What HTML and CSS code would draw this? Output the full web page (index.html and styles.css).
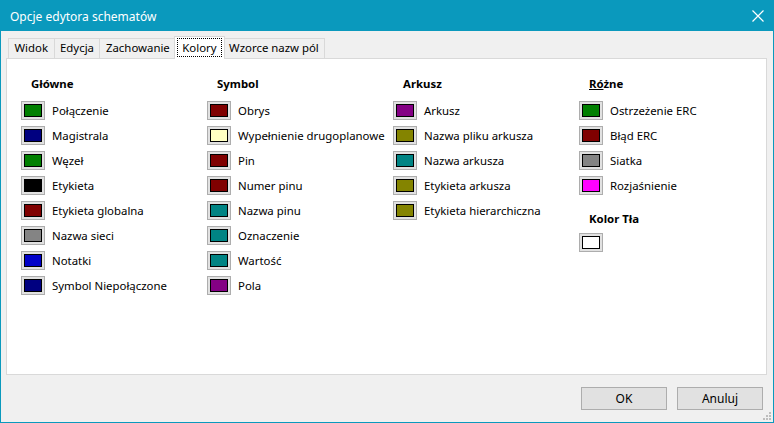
FILE: index.html
```html
<!DOCTYPE html>
<html lang="pl">
  <head>
    <meta charset="UTF-8" />
    <title>Opcje edytora schematów</title>
    <link rel="stylesheet" href="styles.css">
  </head>
  <body>
    <div class="window">
      <div class="titlebar">
        <span class="title">Opcje edytora schematów</span>
        <svg class="close" width="12" height="12" viewBox="0 0 12 12">
          <path d="M0.5 0.5 L11.5 11.5 M11.5 0.5 L0.5 11.5" stroke="#fff" stroke-width="1.2" />
        </svg>
      </div>

      <div class="content">
        <!-- tabs -->
        <div class="tabs">
          <div class="tab">Widok</div>
          <div class="tab">Edycja</div>
          <div class="tab">Zachowanie</div>
          <div class="tab active"><span class="focus">Kolory</span></div>
          <div class="tab">Wzorce nazw pól</div>
        </div>

        <div class="panel">
          <div class="columns">
            <div class="group">
              <div class="heading">Główne</div>
              <div class="row"><span class="swatch"><i style="background:#008000"></i></span>Połączenie</div>
              <div class="row"><span class="swatch"><i style="background:#000080"></i></span>Magistrala</div>
              <div class="row"><span class="swatch"><i style="background:#008000"></i></span>Węzeł</div>
              <div class="row"><span class="swatch"><i style="background:#000000"></i></span>Etykieta</div>
              <div class="row"><span class="swatch"><i style="background:#800000"></i></span>Etykieta globalna</div>
              <div class="row"><span class="swatch"><i style="background:#848484"></i></span>Nazwa sieci</div>
              <div class="row"><span class="swatch"><i style="background:#0000c8"></i></span>Notatki</div>
              <div class="row"><span class="swatch"><i style="background:#000080"></i></span>Symbol Niepołączone</div>
            </div>

            <div class="group">
              <div class="heading">Symbol</div>
              <div class="row"><span class="swatch"><i style="background:#800000"></i></span>Obrys</div>
              <div class="row"><span class="swatch"><i style="background:#ffffc2"></i></span>Wypełnienie drugoplanowe</div>
              <div class="row"><span class="swatch"><i style="background:#800000"></i></span>Pin</div>
              <div class="row"><span class="swatch"><i style="background:#800000"></i></span>Numer pinu</div>
              <div class="row"><span class="swatch"><i style="background:#008484"></i></span>Nazwa pinu</div>
              <div class="row"><span class="swatch"><i style="background:#008484"></i></span>Oznaczenie</div>
              <div class="row"><span class="swatch"><i style="background:#008484"></i></span>Wartość</div>
              <div class="row"><span class="swatch"><i style="background:#840084"></i></span>Pola</div>
            </div>

            <div class="group">
              <div class="heading">Arkusz</div>
              <div class="row"><span class="swatch"><i style="background:#840084"></i></span>Arkusz</div>
              <div class="row"><span class="swatch"><i style="background:#848400"></i></span>Nazwa pliku arkusza</div>
              <div class="row"><span class="swatch"><i style="background:#008484"></i></span>Nazwa arkusza</div>
              <div class="row"><span class="swatch"><i style="background:#848400"></i></span>Etykieta arkusza</div>
              <div class="row"><span class="swatch"><i style="background:#848400"></i></span>Etykieta hierarchiczna</div>
            </div>

            <div class="group">
              <div class="heading"><span class="mnemonic">Ró</span>żne</div>
              <div class="row"><span class="swatch"><i style="background:#008000"></i></span>Ostrzeżenie ERC</div>
              <div class="row"><span class="swatch"><i style="background:#800000"></i></span>Błąd ERC</div>
              <div class="row"><span class="swatch"><i style="background:#848484"></i></span>Siatka</div>
              <div class="row"><span class="swatch"><i style="background:#ff00ff"></i></span>Rozjaśnienie</div>
              <div class="heading second">Kolor Tła</div>
              <div class="row"><span class="swatch"><i style="background:#ffffff"></i></span></div>
            </div>
          </div>
        </div>

        <div class="buttons">
          <button class="btn">OK</button>
          <button class="btn">Anuluj</button>
        </div>
        <svg class="grip" width="8" height="8" viewBox="0 0 8 8">
          <rect x="6" y="0" width="2" height="2" fill="#bdbdbd" />
          <rect x="3" y="3" width="2" height="2" fill="#bdbdbd" />
          <rect x="6" y="3" width="2" height="2" fill="#bdbdbd" />
          <rect x="0" y="6" width="2" height="2" fill="#bdbdbd" />
          <rect x="3" y="6" width="2" height="2" fill="#bdbdbd" />
          <rect x="6" y="6" width="2" height="2" fill="#bdbdbd" />
        </svg>
      </div>
    </div>
  </body>
</html>
```

FILE: styles.css
```css
* {
  box-sizing: border-box;
}

body {
  margin: 0;
  font-family: "Noto Sans", "Open Sans", sans-serif;
  font-size: 11.4px;
  color: #000;
}

.window {
  width: 774px;
  height: 423px;
  border: 1px solid #0a99bd;
  display: flex;
  flex-direction: column;
  background: #f0f0f0;
}

.titlebar {
  height: 30px;
  background: #0a99bd;
  display: flex;
  align-items: center;
  justify-content: space-between;
  padding: 0 8px 0 9px;
  flex-shrink: 0;
}

.title {
  color: #fff;
  font-size: 12px;
}

.close {
  margin-right: 1px;
}

.content {
  flex: 1;
  display: flex;
  flex-direction: column;
  position: relative;
}

.tabs {
  display: flex;
  align-items: flex-end;
  height: 27px;
  padding-left: 7px;
}

.tab {
  height: 20px;
  line-height: 18px;
  padding: 0 5.5px;
  border: 1px solid #d9d9d9;
  border-bottom: none;
  border-right: none;
  background: #f0f0f0;
  white-space: nowrap;
}

.tab:last-child {
  border-right: 1px solid #d9d9d9;
}

.tab.active {
  background: #fff;
  margin: 0 -1px -1px -1px;
  padding: 1px 2px 0;
  border-right: 1px solid #d9d9d9;
  position: relative;
  z-index: 1;
  height: 23px;
}

.tab.active + .tab {
  border-left: none;
}

.focus {
  display: block;
  border: 1px dotted #000;
  padding: 0 4px;
  line-height: 17px;
}

.panel {
  margin: 0 6px 0 5px;
  height: 317px;
  background: #fff;
  border: 1px solid #d9d9d9;
  padding: 17px 0 0 14px;
}

.columns {
  display: grid;
  grid-template-columns: repeat(4, 186px);
}

.heading {
  font-weight: bold;
  line-height: 16px;
  margin: 0 0 6px 10px;
}

.heading.second {
  margin-top: 13px;
  margin-bottom: 3px;
}

.mnemonic {
  text-decoration: underline;
}

.row {
  height: 25px;
  display: flex;
  align-items: center;
  white-space: nowrap;
}

.swatch {
  width: 24px;
  height: 19px;
  border: 1px solid #adadad;
  background: #e1e1e1;
  display: flex;
  align-items: center;
  justify-content: center;
  margin-right: 7px;
  flex-shrink: 0;
}

.swatch i {
  display: block;
  width: 18px;
  height: 13px;
  border: 1px solid #000;
}

.buttons {
  display: flex;
  justify-content: flex-end;
  gap: 10px;
  padding: 12px 10px 0 0;
}

.btn {
  width: 86px;
  height: 23px;
  border: 1px solid #adadad;
  background: #e1e1e1;
  font-family: inherit;
  font-size: 12px;
  color: #000;
  padding: 0;
}

.grip {
  position: absolute;
  right: 2px;
  bottom: 2px;
}
```
